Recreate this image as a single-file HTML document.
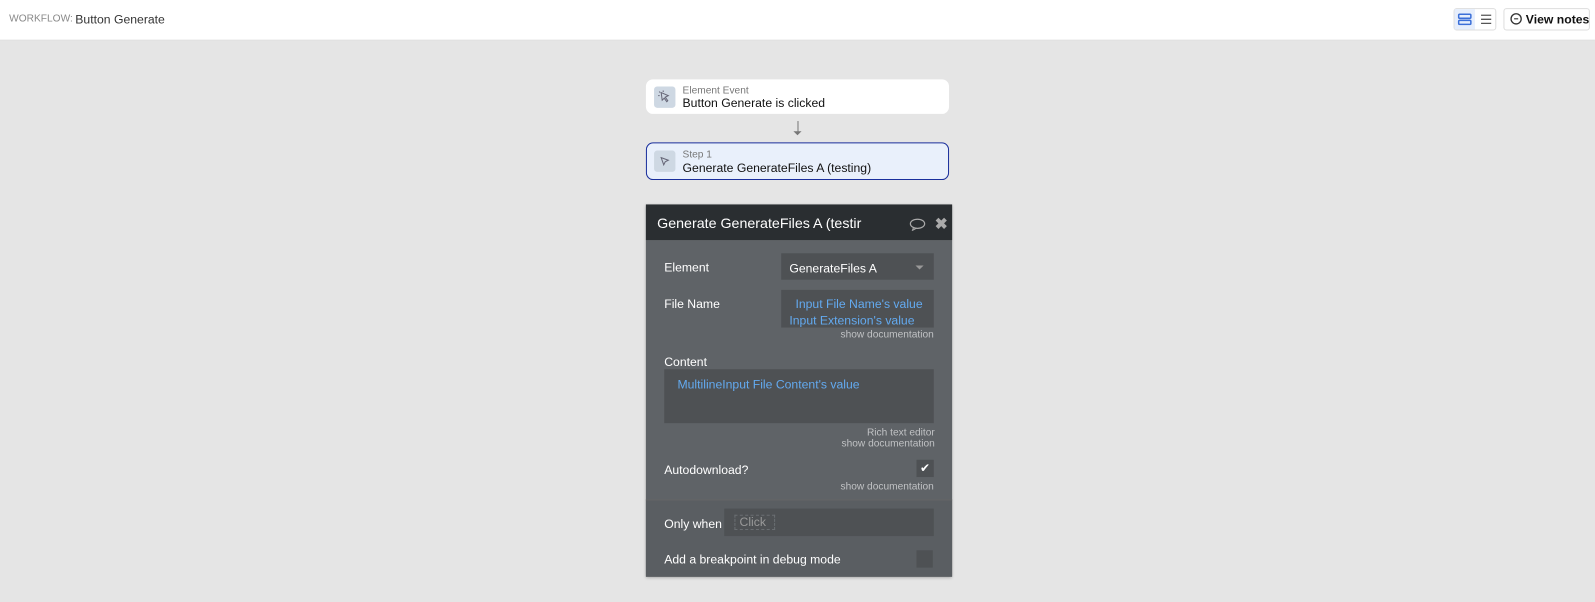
<!DOCTYPE html>
<html><head><style>
*{box-sizing:border-box;margin:0;padding:0}
body{width:1595px;height:602px;background:#e5e5e5;font-family:"Liberation Sans",sans-serif;position:relative;overflow:hidden;font-size:12px}
#wrap{position:absolute;left:0;top:0;width:1568px;height:592px;transform:scale(1.0172);transform-origin:0 0}
.top{position:absolute;left:0;top:0;width:1568px;height:40px;background:#fff;border-bottom:1px solid #ddd}
.a{position:absolute}
.card{position:absolute;left:635px;width:298px;border-radius:7px}
.ic{position:absolute;left:8px;top:7px;width:21px;height:21px;background:#ced8e3;border-radius:3px}
.lbl{color:#777;font-size:10px}
.t{color:#111;font-size:12px}
.panel{position:absolute;left:635px;top:201px;width:301px;height:366px;background:#5f6367;box-shadow:0 1px 3px rgba(0,0,0,.3)}
.w{color:#fff;font-size:12px}
.blue{color:#63aaf0;font-size:12px}
.doc{color:#c0c2c4;font-size:10px;text-align:right}
.box{background:#4e5154}
</style></head><body>
<div id="wrap">
<div class="top">
 <div class="a" style="left:9px;top:13px;font-size:10px;color:#888">WORKFLOW:</div>
 <div class="a" style="left:74px;top:12px;font-size:12px;color:#333">Button Generate</div>
 <div class="a" style="left:1429px;top:8px;width:42px;height:22px;border:1px solid #ddd;border-radius:3px"></div>
 <div class="a" style="left:1430px;top:9px;width:20px;height:20px;background:#e6eefc"></div>
 <svg class="a" style="left:1433px;top:13px" width="14" height="12"><rect x="1" y="1" width="12" height="4" rx="1" fill="none" stroke="#3b6fd8" stroke-width="1.5"/><rect x="1" y="7" width="12" height="4" rx="1" fill="none" stroke="#3b6fd8" stroke-width="1.5"/></svg>
 <svg class="a" style="left:1455px;top:13px" width="12" height="12"><path d="M1 2H11M1 6H11M1 10H11" stroke="#555" stroke-width="1.3"/></svg>
 <div class="a" style="left:1478px;top:8px;width:85px;height:22px;border:1px solid #ddd;border-radius:3px"></div>
 <svg class="a" style="left:1484px;top:12px" width="13" height="13"><circle cx="6.5" cy="6.5" r="5" fill="none" stroke="#333" stroke-width="1.3"/><path d="M4.5 6.5H8.5" stroke="#333" stroke-width="1.2"/></svg>
 <div class="a" style="left:1500px;top:12px;font-size:12px;color:#111;font-weight:bold">View notes</div>
</div>
<div class="card" style="top:78px;height:34px;background:#fff">
 <div class="ic"><svg width="21" height="21"><path d="M7 6L14 9L11 10.5L13.5 14L12.5 15L10 11.5L8 13.5Z" fill="none" stroke="#667" stroke-width="1"/><path d="M5 5L6 6M9 4V5.5M4 9H5.5" stroke="#667" stroke-width="1"/></svg></div>
 <div class="a lbl" style="left:36px;top:6px">Element Event</div>
 <div class="a t" style="left:36px;top:16px">Button Generate is clicked</div>
</div>
<div class="a" style="left:784px;top:119px;width:1px;height:12px;background:#777"></div>
<div class="a" style="left:780px;top:129px;border-left:4px solid transparent;border-right:4px solid transparent;border-top:4px solid #777"></div>
<div class="card" style="top:140px;height:37px;background:#e9f0fb;border:1px solid #1a2f9c">
 <div class="ic" style="left:7px;top:7px"><svg width="21" height="21"><path d="M7 7L14 9.5L11 11L9.5 14Z" fill="none" stroke="#667" stroke-width="1"/></svg></div>
 <div class="a lbl" style="left:35px;top:6px">Step 1</div>
 <div class="a t" style="left:35px;top:17px">Generate GenerateFiles A (testing)</div>
</div>
<div class="panel">
 <div class="a" style="left:0;top:0;width:301px;height:35px;background:#2a2e31"></div>
 <div class="a" style="left:11px;top:10px;color:#fff;font-size:14px">Generate GenerateFiles A (testir</div>
 <svg class="a" style="left:259px;top:13px" width="16" height="13"><ellipse cx="8" cy="6" rx="7" ry="4.5" fill="none" stroke="#aaa" stroke-width="1.2"/><path d="M4 10L3 12.5L7 10.3" fill="none" stroke="#aaa" stroke-width="1"/></svg>
 <div class="a" style="left:284px;top:10px;color:#aaa;font-size:15px;font-weight:bold">✖</div>
 <div class="a w" style="left:18px;top:55px">Element</div>
 <div class="a box" style="left:133px;top:48px;width:150px;height:26px"></div>
 <div class="a w" style="left:141px;top:56px">GenerateFiles A</div>
 <div class="a" style="left:265px;top:60px;border-left:4px solid transparent;border-right:4px solid transparent;border-top:4px solid #999"></div>
 <div class="a w" style="left:18px;top:91px">File Name</div>
 <div class="a box" style="left:133px;top:84px;width:150px;height:37px"></div>
 <div class="a blue" style="left:147px;top:91px">Input File Name's value</div>
 <div class="a blue" style="left:141px;top:107px">Input Extension's value</div>
 <div class="a doc" style="right:18px;top:123px">show documentation</div>
 <div class="a w" style="left:18px;top:148px">Content</div>
 <div class="a box" style="left:18px;top:162px;width:265px;height:53px"></div>
 <div class="a blue" style="left:31px;top:170px">MultilineInput File Content's value</div>
 <div class="a doc" style="right:17px;top:219px">Rich text editor</div>
 <div class="a doc" style="right:17px;top:230px">show documentation</div>
 <div class="a w" style="left:18px;top:254px">Autodownload?</div>
 <div class="a box" style="left:266px;top:251px;width:17px;height:17px;color:#fff;font-size:12px;text-align:center;line-height:17px">✔</div>
 <div class="a doc" style="right:18px;top:272px">show documentation</div>
 <div class="a" style="left:0;top:290px;width:301px;height:76px;background:#5a5e62;border-top:1px solid #666"></div>
 <div class="a w" style="left:18px;top:307px">Only when</div>
 <div class="a box" style="left:77px;top:299px;width:206px;height:27px"></div>
 <div class="a" style="left:87px;top:305px;width:40px;height:15px;border:1px dashed #6a6e72;color:#999;font-size:12px;padding-left:4px;line-height:13px">Click</div>
 <div class="a w" style="left:18px;top:342px">Add a breakpoint in debug mode</div>
 <div class="a box" style="left:266px;top:340px;width:16px;height:17px"></div>
</div>
</div>
</body></html>
